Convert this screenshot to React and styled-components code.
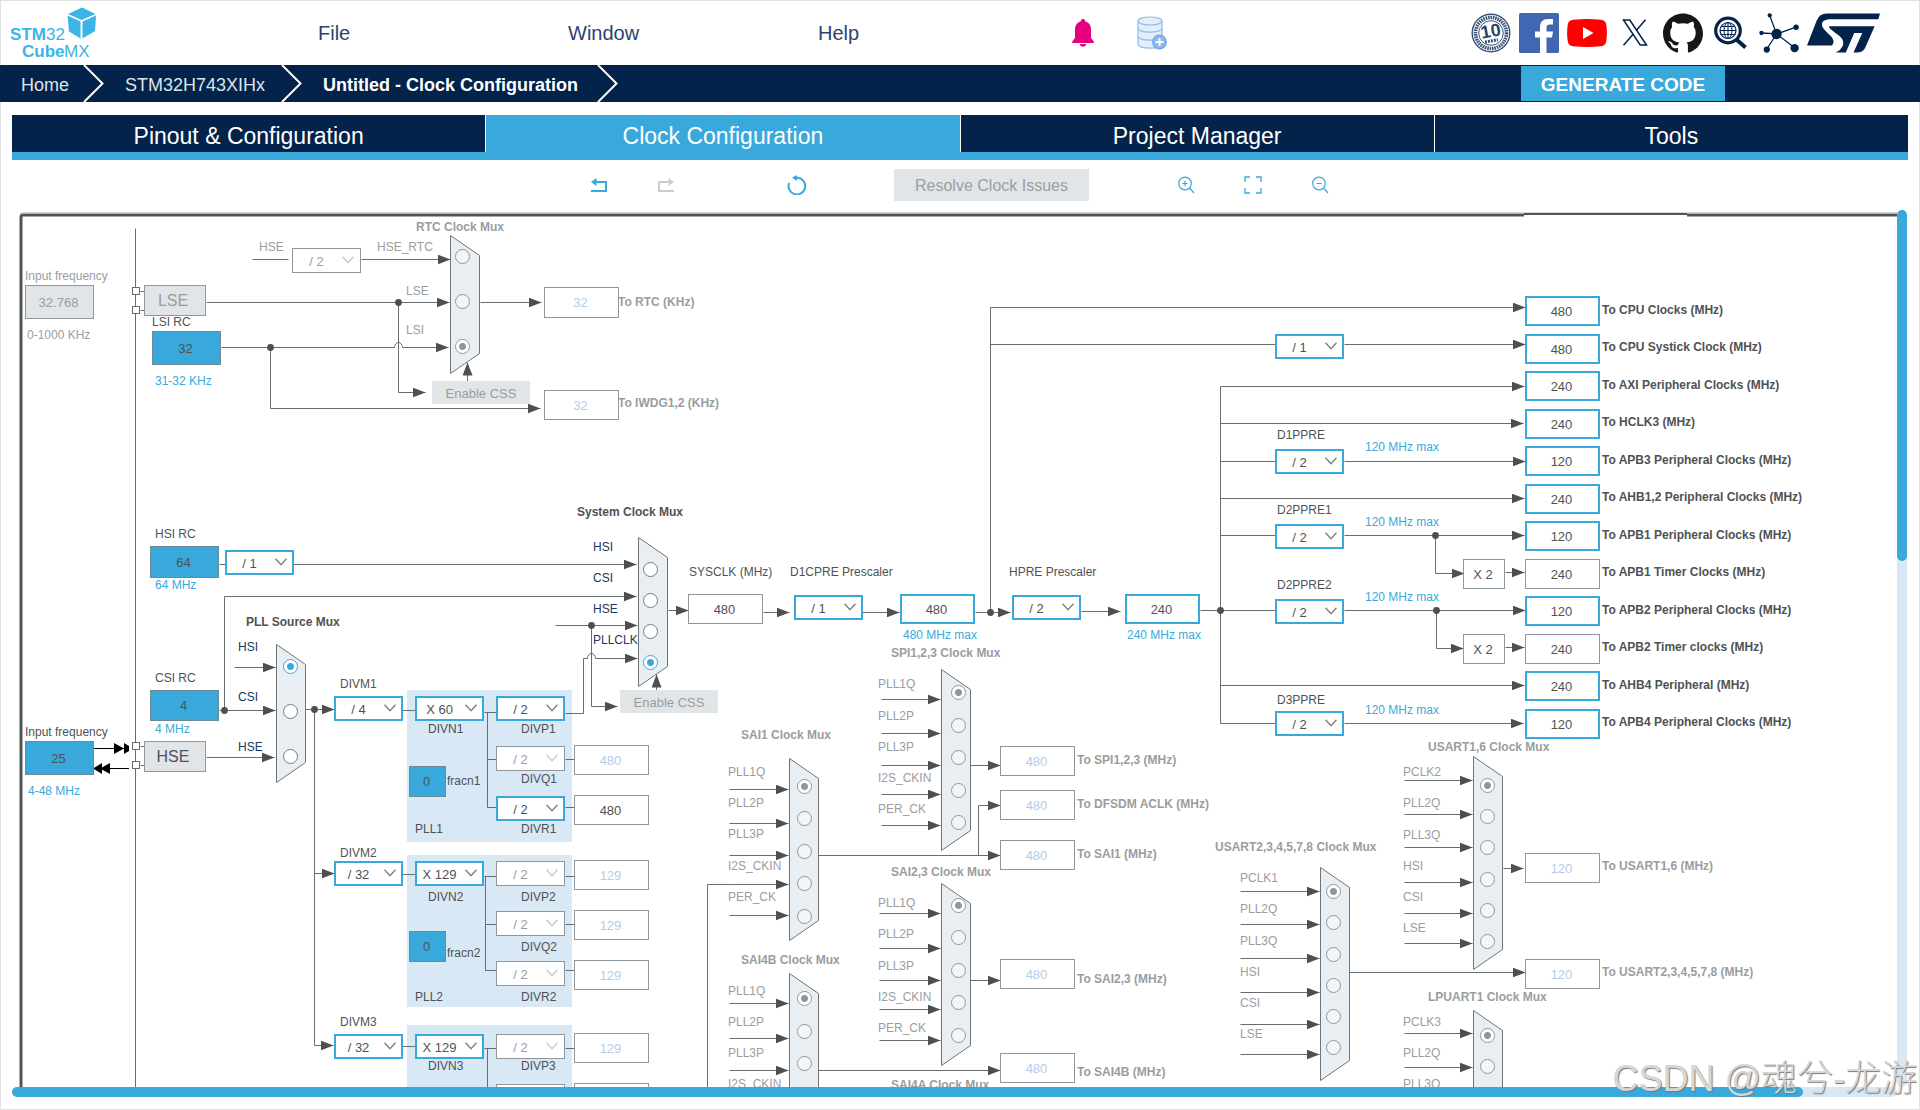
import React from "react";
import styled, { createGlobalStyle, css } from "styled-components";
import { SiGithub } from "react-icons/si";

const C = {
  navy: "#03234b",
  blue: "#39a9dc",
  pale: "#d9e8f5",
  text: "#4f5254",
  muted: "#9a9d9f",
  faint: "#b4cce8",
  button: "#e1e5e8",
  line: "#6a6d6d",
  edge: "#8f979d",
  mux: "#e9eef2",
};

const ORIGIN_X = 12;
const ORIGIN_Y = 210;

const GlobalStyle = createGlobalStyle`
  * { box-sizing: border-box; }
  body { margin: 0; background: #fff; font-family: "Liberation Sans", Arial, sans-serif; }
  button, input, select { font-family: inherit; margin: 0; padding: 0; border: 0; opacity: 1; }
`;

/* ---------- shell ---------- */

const Shell = styled.div`
  display: flex;
  flex-direction: column;
  height: 100vh;
  overflow: hidden;
  position: relative;
  box-shadow: inset 0 0 0 1px #dfe1e2;
`;

const Header = styled.header`
  display: flex;
  align-items: center;
  flex: none;
  height: 65px;
  padding-right: 40px;
`;

const LogoLink = styled.a`
  flex: none;
  width: 318px;
  height: 65px;
  svg { display: block; }
`;

const Menu = styled.nav`
  display: flex;
`;

const MenuButton = styled.button`
  width: 250px;
  background: none;
  text-align: left;
  font-size: 20px;
  line-height: 24px;
  color: #2c4370;
`;

const Notices = styled.div`
  display: flex;
  align-items: center;
  gap: 43px;
  margin-left: 4px;
`;

const IconButton = styled.button`
  display: flex;
  background: none;
  color: ${(p) => p.$color || C.blue};
`;

const Links = styled.nav`
  display: flex;
  align-items: center;
  gap: 8px;
  margin-left: auto;
  a { display: flex; justify-content: center; min-width: 40px; color: ${C.navy}; }
`;

const CrumbBar = styled.nav`
  display: flex;
  flex: none;
  height: 37px;
  background: ${C.navy};
`;

const Crumb = styled.a`
  display: flex;
  align-items: center;
  justify-content: space-between;
  min-width: ${(p) => p.$w}px;
  padding-left: 21px;
  color: ${(p) => (p.$current ? "#fff" : "#dde3ea")};
  font-size: 18px;
  font-weight: ${(p) => (p.$current ? 700 : 400)};
  text-decoration: none;
  white-space: nowrap;
  span { padding-top: 4px; }
`;

const Generate = styled.button`
  align-self: center;
  width: 204px;
  height: 35px;
  margin-left: auto;
  margin-right: 195px;
  && { padding-top: 2px; }
  background: ${C.blue};
  color: #fff;
  font-size: 19px;
  font-weight: 700;
`;

const Tabs = styled.div`
  display: grid;
  grid-template-columns: repeat(4, 1fr);
  column-gap: 1px;
  flex: none;
  margin: 13px 12px 0;
  border-bottom: 8px solid ${C.blue};
`;

const Tab = styled.button`
  height: 37px;
  && { padding-top: 5px; }
  background: ${(p) => (p.$active ? C.blue : C.navy)};
  color: #fff;
  font-size: 23px;
`;

const Toolbar = styled.div`
  display: flex;
  align-items: center;
  flex: none;
  height: 50px;
  padding-left: 590px;
`;

const ToolGroup = styled.div`
  display: flex;
  gap: ${(p) => p.$gap}px;
  margin-right: ${(p) => p.$after}px;
`;

const Resolve = styled.button`
  width: 195px;
  height: 32px;
  margin-right: 88px;
  && { padding-top: 2px; }
  background: ${C.button};
  color: #9a9fa3;
  font-size: 16px;
`;

const Workspace = styled.main`
  display: grid;
  grid-template-columns: 1fr 10px;
  grid-template-rows: 1fr 10px;
  flex: 1;
  min-height: 0;
  margin: 0 13px 13px 12px;
`;

const Track = styled.div`
  background: ${C.pale};
  border-radius: 5px;
`;

const Thumb = styled.div`
  width: ${(p) => p.$w || "100%"};
  height: ${(p) => p.$h || "100%"};
  border-radius: 5px;
  background: ${C.blue};
`;

const Viewport = styled.div`
  position: relative;
  overflow: hidden;
`;

const Watermark = styled.div`
  position: absolute;
  right: 3px;
  bottom: 6px;
  color: #d6d6d6;
  font-family: "Liberation Sans", "Noto Sans CJK SC", sans-serif;
  font-size: 36px;
  font-weight: 300;
  line-height: 50px;
  text-shadow: 1px 1px 1px #777;
  white-space: nowrap;
`;

/* ---------- diagram parts ---------- */

const placed = css`
  position: absolute;
  left: ${(p) => p.$x - ORIGIN_X}px;
  top: ${(p) => p.$y - ORIGIN_Y}px;
`;

const Wiring = styled.svg`
  position: absolute;
  left: 0;
  top: 0;
`;

const PllPanel = styled.div`
  ${placed}
  width: 165px;
  height: 152px;
  background: ${C.pale};
`;

const tones = {
  dark: C.text,
  muted: C.muted,
  blue: C.blue,
  navy: "#1d3763",
};

const Caption = styled.label`
  ${placed}
  margin-top: -7px;
  color: ${(p) => tones[p.$tone]};
  font-size: 12px;
  font-weight: ${(p) => (p.$bold ? 700 : 400)};
  line-height: 14px;
  white-space: nowrap;
`;

const looks = {
  active: css`border: 2px solid ${C.blue}; background: #fff; color: ${C.text};`,
  plain: css`border: 1px solid ${C.edge}; background: #fff; color: ${C.text};`,
  off: css`border: 1px solid ${C.edge}; background: #fff; color: ${C.faint};`,
  offSelect: css`border: 1px solid ${C.edge}; background: #fff; color: ${C.muted};`,
  source: css`border: 1px solid #6f8895; background: ${C.blue}; color: ${C.text};`,
  disabled: css`border: 1px solid ${C.edge}; background: ${C.button}; color: ${C.muted};`,
};

const Value = styled.input`
  ${placed}
  width: ${(p) => p.$w}px;
  height: ${(p) => p.$h}px;
  && { ${(p) => looks[p.$look]} padding-right: 2px; }
  font-size: 13px;
  text-align: center;
`;

const PickerBox = styled.div`
  ${placed}
  width: 69px;
  height: 25px;
  svg { position: absolute; right: 7px; top: 8px; pointer-events: none; }
`;

const Picker = styled.select`
  appearance: none;
  width: 100%;
  height: 100%;
  && { ${(p) => looks[p.$look]} padding: 2px 20px 0 0; }
  font-size: 13px;
  text-align: center;
  text-align-last: center;
`;

const Block = styled.button`
  ${placed}
  width: ${(p) => p.$w}px;
  height: ${(p) => p.$h}px;
  && { border: ${(p) => (p.$flat ? "0" : `1px solid ${C.edge}`)}; padding: ${(p) => (p.$flat ? "2px 0 0" : "0 4px 0 0")}; }
  background: ${C.button};
  color: ${(p) => (p.$dark ? C.text : C.muted)};
  font-size: ${(p) => p.$size}px;
`;

const Radio = styled.input`
  ${placed}
  appearance: none;
  width: 15px;
  height: 15px;
  && { border: 1px solid ${(p) => (p.$muted ? C.edge : "#777b7e")}; }
  border-radius: 50%;
  background: ${(p) => (p.$muted ? "#f3f5f7" : "#fff")};
  &&:checked {
    border-color: ${(p) => (p.$muted ? C.edge : C.blue)};
    background: radial-gradient(circle, ${(p) => (p.$muted ? C.edge : C.blue)} 3px, #fff 4px);
  }
`;

/* ---------- diagram data ---------- */

const muxes = [
  { id: "rtc", title: "RTC Clock Mux", tx: 416, ty: 227, x: 450, w: 29, top: 235, bottom: 373, muted: true, lx: 406, rx: 462, sel: 2,
    ins: [["HSE_RTC", 247, 256, 0, 377], ["LSE", 291, 301], ["LSI", 330, 346]] },
  { id: "pll", title: "PLL Source Mux", tx: 246, ty: 622, x: 276, w: 29, top: 644, bottom: 782, lx: 238, rx: 290, sel: 0,
    ins: [["HSI", 647, 666, 667], ["CSI", 697, 711], ["HSE", 747, 756]], wx: 234 },
  { id: "sys", title: "System Clock Mux", tx: 577, ty: 512, x: 638, w: 29, top: 537, bottom: 686, lx: 593, rx: 650, sel: 3,
    ins: [["HSI", 547, 569], ["CSI", 578, 600], ["HSE", 609, 631], ["PLLCLK", 640, 662]] },
  { id: "spi", title: "SPI1,2,3 Clock Mux", tx: 891, ty: 653, x: 941, w: 29, top: 669, bottom: 850, muted: true, lx: 878, rx: 958, sel: 0, wx: 881,
    ins: [["PLL1Q", 684, 692, 699], ["PLL2P", 716, 725, 733], ["PLL3P", 747, 757, 765], ["I2S_CKIN", 778, 790, 794], ["PER_CK", 809, 822, 825]] },
  { id: "sai1", title: "SAI1 Clock Mux", tx: 741, ty: 735, x: 789, w: 29, top: 758, bottom: 940, muted: true, lx: 728, rx: 804, sel: 0, wx: 729,
    ins: [["PLL1Q", 772, 786, 789], ["PLL2P", 803, 818, 823], ["PLL3P", 834, 851, 855], ["I2S_CKIN", 866, 883, 884], ["PER_CK", 897, 916, 915]] },
  { id: "sai23", title: "SAI2,3 Clock Mux", tx: 891, ty: 872, x: 941, w: 29, top: 883, bottom: 1065, muted: true, lx: 878, rx: 958, sel: 0, wx: 879,
    ins: [["PLL1Q", 903, 905, 913], ["PLL2P", 934, 937, 948], ["PLL3P", 966, 970, 980], ["I2S_CKIN", 997, 1002, 1009], ["PER_CK", 1028, 1035, 1040]] },
  { id: "sai4b", title: "SAI4B Clock Mux", tx: 741, ty: 960, x: 789, w: 29, top: 973, bottom: 1154, muted: true, lx: 728, rx: 804, sel: 0, wx: 729,
    ins: [["PLL1Q", 991, 998, 1003], ["PLL2P", 1022, 1031, 1038], ["PLL3P", 1053, 1063, 1070], ["I2S_CKIN", 1084, 1096, 1100]] },
  { id: "sai4a", title: "SAI4A Clock Mux", tx: 891, ty: 1085, x: 941, w: 29, top: 1098, bottom: 1279, muted: true, lx: 878, rx: 958, sel: 0, ins: [] },
  { id: "u16", title: "USART1,6 Clock Mux", tx: 1428, ty: 747, x: 1473, w: 29, top: 756, bottom: 969, muted: true, lx: 1403, rx: 1487, sel: 0, wx: 1404,
    ins: [["PCLK2", 772, 785, 780], ["PLL2Q", 803, 816, 814], ["PLL3Q", 835, 847, 847], ["HSI", 866, 879, 882], ["CSI", 897, 910, 913], ["LSE", 928, 941, 943]] },
  { id: "u2", title: "USART2,3,4,5,7,8 Clock Mux", tx: 1215, ty: 847, x: 1320, w: 29, top: 867, bottom: 1080, muted: true, lx: 1240, rx: 1333, sel: 0, wx: 1240,
    ins: [["PCLK1", 878, 891, 891], ["PLL2Q", 909, 922, 924], ["PLL3Q", 941, 954, 958], ["HSI", 972, 985, 992], ["CSI", 1003, 1016, 1024], ["LSE", 1034, 1047, 1054]] },
  { id: "lpu", title: "LPUART1 Clock Mux", tx: 1428, ty: 997, x: 1473, w: 29, top: 1010, bottom: 1223, muted: true, lx: 1403, rx: 1487, sel: 0, wx: 1404,
    ins: [["PCLK3", 1022, 1035, 1033], ["PLL2Q", 1053, 1066, 1067], ["PLL3Q", 1084, 1097, 1100]] },
];

/* [id, x, y, width, height, look, value, label, labelX, labelY, labelTone, bold] */
const values = [
  ["lse-in", 25, 285, 69, 34, "disabled", "32.768", "Input frequency", 25, 276, "muted"],
  ["lsi", 152, 331, 69, 34, "source", "32", "LSI RC", 152, 322, "dark"],
  ["rtc-out", 544, 287, 75, 31, "off", "32", "To RTC (KHz)", 618, 302, "muted", 1],
  ["iwdg-out", 544, 390, 75, 30, "off", "32", "To IWDG1,2 (KHz)", 618, 403, "muted", 1],
  ["hsi", 150, 546, 69, 32, "source", "64", "HSI RC", 155, 534, "dark"],
  ["csi", 150, 690, 69, 31, "source", "4", "CSI RC", 155, 678, "dark"],
  ["hse-in", 25, 741, 69, 34, "source", "25", "Input frequency", 25, 732, "dark"],
  ["sysclk", 688, 594, 75, 30, "plain", "480", "SYSCLK (MHz)", 689, 572, "dark"],
  ["d1cpre-out", 900, 594, 75, 30, "active", "480", "480 MHz max", 903, 635, "blue"],
  ["hpre-out", 1125, 594, 75, 30, "active", "240", "240 MHz max", 1127, 635, "blue"],
  ["fracn1", 409, 766, 37, 31, "source", "0", "fracn1", 447, 781, "dark"],
  ["fracn2", 409, 931, 37, 31, "source", "0", "fracn2", 447, 953, "dark"],
  ["spi-out", 1000, 746, 75, 30, "off", "480", "To SPI1,2,3 (MHz)", 1077, 760, "muted", 1],
  ["dfsdm-out", 1000, 790, 75, 30, "off", "480", "To DFSDM ACLK (MHz)", 1077, 804, "muted", 1],
  ["sai1-out", 1000, 840, 75, 30, "off", "480", "To SAI1 (MHz)", 1077, 854, "muted", 1],
  ["sai23-out", 1000, 959, 75, 30, "off", "480", "To SAI2,3 (MHz)", 1077, 979, "muted", 1],
  ["sai4b-out", 1000, 1053, 75, 30, "off", "480", "To SAI4B (MHz)", 1077, 1072, "muted", 1],
  ["cpu", 1525, 296, 75, 30, "active", "480", "To CPU Clocks (MHz)", 1602, 310, "dark", 1],
  ["systick", 1525, 334, 75, 30, "active", "480", "To CPU Systick Clock (MHz)", 1602, 347, "dark", 1],
  ["axi", 1525, 371, 75, 30, "active", "240", "To AXI Peripheral Clocks (MHz)", 1602, 385, "dark", 1],
  ["hclk3", 1525, 409, 75, 30, "active", "240", "To HCLK3 (MHz)", 1602, 422, "dark", 1],
  ["apb3", 1525, 446, 75, 30, "active", "120", "To APB3 Peripheral Clocks (MHz)", 1602, 460, "dark", 1],
  ["ahb12", 1525, 484, 75, 30, "active", "240", "To AHB1,2 Peripheral Clocks (MHz)", 1602, 497, "dark", 1],
  ["apb1", 1525, 521, 75, 30, "active", "120", "To APB1 Peripheral Clocks (MHz)", 1602, 535, "dark", 1],
  ["apb1t", 1525, 559, 75, 30, "plain", "240", "To APB1 Timer Clocks (MHz)", 1602, 572, "dark", 1],
  ["apb2", 1525, 596, 75, 30, "active", "120", "To APB2 Peripheral Clocks (MHz)", 1602, 610, "dark", 1],
  ["apb2t", 1525, 634, 75, 30, "plain", "240", "To APB2 Timer clocks (MHz)", 1602, 647, "dark", 1],
  ["ahb4", 1525, 671, 75, 30, "active", "240", "To AHB4 Peripheral (MHz)", 1602, 685, "dark", 1],
  ["apb4", 1525, 709, 75, 30, "active", "120", "To APB4 Peripheral Clocks (MHz)", 1602, 722, "dark", 1],
  ["u16-out", 1525, 853, 75, 30, "off", "120", "To USART1,6 (MHz)", 1602, 866, "muted", 1],
  ["u2-out", 1525, 959, 75, 30, "off", "120", "To USART2,3,4,5,7,8 (MHz)", 1602, 972, "muted", 1],
];

/* [id, x, y, width, height, look, value, accessible name] */
const unlabelled = [
  ["pll1q-out", 574, 745, 75, 30, "off", "480", "PLL1Q (MHz)"],
  ["pll1r-out", 574, 795, 75, 30, "plain", "480", "PLL1R (MHz)"],
  ["pll2p-out", 574, 860, 75, 30, "off", "129", "PLL2P (MHz)"],
  ["pll2q-out", 574, 910, 75, 30, "off", "129", "PLL2Q (MHz)"],
  ["pll2r-out", 574, 960, 75, 30, "off", "129", "PLL2R (MHz)"],
  ["pll3p-out", 574, 1033, 75, 30, "off", "129", "PLL3P (MHz)"],
  ["pll3q-out", 574, 1083, 75, 30, "off", "129", "PLL3Q (MHz)"],
  ["apb1-x2", 1463, 559, 42, 30, "plain", "X 2", "APB1 timer multiplier"],
  ["apb2-x2", 1463, 634, 42, 30, "plain", "X 2", "APB2 timer multiplier"],
];

/* [id, x, y, value, off, label, labelX, labelY] */
const pickers = [
  ["rtcdiv", 292, 248, "/ 2", 1, "HSE", 259, 247, "muted"],
  ["hsidiv", 225, 550, "/ 1", 0],
  ["divm1", 334, 696, "/ 4", 0, "DIVM1", 340, 684],
  ["divn1", 415, 696, "X 60", 0, "DIVN1", 428, 729],
  ["divp1", 496, 696, "/ 2", 0, "DIVP1", 521, 729],
  ["divq1", 496, 746, "/ 2", 1, "DIVQ1", 521, 779],
  ["divr1", 496, 796, "/ 2", 0, "DIVR1", 521, 829],
  ["divm2", 334, 861, "/ 32", 0, "DIVM2", 340, 853],
  ["divn2", 415, 861, "X 129", 0, "DIVN2", 428, 897],
  ["divp2", 496, 861, "/ 2", 1, "DIVP2", 521, 897],
  ["divq2", 496, 911, "/ 2", 1, "DIVQ2", 521, 947],
  ["divr2", 496, 961, "/ 2", 1, "DIVR2", 521, 997],
  ["divm3", 334, 1034, "/ 32", 0, "DIVM3", 340, 1022],
  ["divn3", 415, 1034, "X 129", 0, "DIVN3", 428, 1066],
  ["divp3", 496, 1034, "/ 2", 1, "DIVP3", 521, 1066],
  ["divq3", 496, 1084, "/ 2", 1],
  ["d1cpre", 794, 595, "/ 1", 0, "D1CPRE Prescaler", 790, 572],
  ["hpre", 1012, 595, "/ 2", 0, "HPRE Prescaler", 1009, 572],
  ["systickdiv", 1275, 334, "/ 1", 0],
  ["d1ppre", 1275, 449, "/ 2", 0, "D1PPRE", 1277, 435],
  ["d2ppre1", 1275, 524, "/ 2", 0, "D2PPRE1", 1277, 510],
  ["d2ppre2", 1275, 599, "/ 2", 0, "D2PPRE2", 1277, 585],
  ["d3ppre", 1275, 711, "/ 2", 0, "D3PPRE", 1277, 700],
];

const notes = [
  ["0-1000 KHz", 27, 335, "muted"],
  ["31-32 KHz", 155, 381, "blue"],
  ["64 MHz", 155, 585, "blue"],
  ["4 MHz", 155, 729, "blue"],
  ["4-48 MHz", 28, 791, "blue"],
  ["PLL1", 415, 829, "dark"],
  ["PLL2", 415, 997, "dark"],
  ["120 MHz max", 1365, 447, "blue"],
  ["120 MHz max", 1365, 522, "blue"],
  ["120 MHz max", 1365, 597, "blue"],
  ["120 MHz max", 1365, 710, "blue"],
];

const arrows = [
  "M361 259H450", "M206 302H449", "M221 347H394a4 5 0 0 1 8 0H448",
  "M398 302V392H425", "M270 347V408H540", "M480 302H541", "M467 381V362",
  "M293 564H636", "M224 710V596H636", "M555 625H637", "M591 625V706H617",
  "M565 713H583V658H587a4 5 0 0 1 8 0H637", "M656 690V674",
  "M219 710H275", "M206 757H274", "M305 709H334", "M314 709V873H334", "M314 873V1045H333",
  "M668 610H688", "M763 612H789", "M862 612H899", "M975 612H1010", "M1081 611H1120",
  "M990 612V307H1525", "M1344 344H1525",
  "M1220 723V386H1524", "M1220 423H1523", "M1344 461H1525", "M1220 498H1524",
  "M1344 535H1524", "M1344 610H1525", "M1220 685H1524", "M1344 723H1523",
  "M1435 535V573H1464", "M1436 610V648H1463", "M1505 572H1524", "M1505 647H1524",
  "M970 765H1000", "M818 855H1000", "M978 855V805H1000", "M970 980H1000", "M818 1070H1000",
  "M1503 868H1523", "M1349 972H1525",
];

const lines = [
  "M135 228V1100", "M252 259H288", "M140 291H144", "M140 310H144", "M140 746H144", "M140 765H144",
  "M219 564H225", "M402 710H415", "M402 874H415", "M402 1046H415",
  "M484 712H496", "M487 712V807H496", "M487 759H496", "M565 759H574", "M565 807H574",
  "M484 876H496", "M485 876V970H496", "M485 924H496", "M565 876H574", "M565 924H574", "M565 970H574",
  "M484 1048H496", "M487 1048V1100", "M565 1048H574",
  "M990 344H1275", "M1200 610H1275", "M1220 461H1275", "M1220 535H1275", "M1220 723H1275",
  "M729 884H707V1100",
];

const dots = [[398, 302], [270, 347], [224, 710], [314, 709], [591, 625], [990, 612], [1220, 610], [1435, 535], [1436, 610]];
const pins = [[132, 287], [132, 306], [132, 742], [132, 761]];

function muxShape({ x, w, top, bottom }) {
  return `M${x} ${top}L${x + w} ${top + 20}V${bottom - 20}L${x} ${bottom}Z`;
}

function Wires() {
  return (
    <Wiring width="1886" height="900" viewBox={`${ORIGIN_X} ${ORIGIN_Y} 1886 900`} aria-hidden="true" fill="none">
      <defs>
        <marker id="head" markerUnits="userSpaceOnUse" markerWidth="14" markerHeight="12" refX="13" refY="5" orient="auto">
          <path d="M0 0L13 5L0 10Z" fill="#4d4f50" />
        </marker>
      </defs>
      <path d="M21 1100V217Q21 215 23 215H1524M1687 215H1898" stroke="#525556" strokeWidth="3" />
      <path d="M20 214Q20 213 23 213H1898" stroke="#b3b8bc" />
      <path d="M1524 214H1687" stroke="#525556" strokeWidth="2" />
      <g stroke={C.line} strokeWidth="1" transform="translate(.5 .5)">
        {lines.map((d) => <path key={d} d={d} />)}
        {muxes.flatMap((m) => (m.wx ? m.ins.filter((i) => i[3]).map((i) => (
          <path key={m.id + i[0]} d={`M${m.wx} ${i[3]}H${m.x - 1}`} markerEnd="url(#head)" />
        )) : []))}
        {arrows.map((d) => <path key={d} d={d} markerEnd="url(#head)" />)}
        {muxes.map((m) => <path key={m.id} d={muxShape(m)} fill={C.mux} stroke="#6e7579" />)}
        {pins.map(([x, y]) => <rect key={y} x={x} y={y} width="7" height="7" fill="#fff" />)}
      </g>
      {dots.map(([x, y]) => <circle key={x + "-" + y} cx={x + 0.5} cy={y + 0.5} r="3.4" fill="#4d4f50" />)}
      <g fill="#000" stroke="#000">
        <path d="M94 748.500H129M94 768.500H129" />
        <path stroke="none" d="M114 743L124 748.500L114 754ZM124 743L129 746V751L124 754ZM110 763L100 768.500L110 774ZM102 763L93 768.500L102 774Z" />
      </g>
    </Wiring>
  );
}

function Mux({ mux }) {
  return (
    <>
      <Caption as="span" $x={mux.tx} $y={mux.ty} $tone={mux.muted ? "muted" : "dark"} $bold>{mux.title}</Caption>
      {mux.ins.map(([name, ly, ry, , lx], i) => {
        const id = `${mux.id}-${i}`;
        return (
          <React.Fragment key={id}>
            <Caption htmlFor={id} $x={lx || mux.lx} $y={ly} $tone={mux.muted ? "muted" : "navy"}>{name}</Caption>
            <Radio type="radio" id={id} name={mux.id} defaultChecked={i === mux.sel} disabled={mux.muted}
              $muted={mux.muted} $x={mux.rx - 7} $y={ry - 7} />
          </React.Fragment>
        );
      })}
    </>
  );
}

function Diagram() {
  return (
    <Viewport>
      <PllPanel $x={407} $y={690} />
      <PllPanel $x={407} $y={855} />
      <PllPanel $x={407} $y={1025} />
      <Wires />
      {muxes.map((m) => <Mux key={m.id} mux={m} />)}
      {notes.map(([t, x, y, tone], i) => <Caption as="span" key={i} $x={x} $y={y} $tone={tone}>{t}</Caption>)}
      {values.map(([id, x, y, w, h, look, v, label, lx, ly, tone, bold]) => (
        <React.Fragment key={id}>
          <Value id={id} $x={x} $y={y} $w={w} $h={h} $look={look} defaultValue={v} disabled={look === "disabled" || look === "off"} />
          <Caption htmlFor={id} $x={lx} $y={ly} $tone={tone} $bold={bold}>{label}</Caption>
        </React.Fragment>
      ))}
      {unlabelled.map(([id, x, y, w, h, look, v, name]) => (
        <Value key={id} id={id} aria-label={name} $x={x} $y={y} $w={w} $h={h} $look={look} defaultValue={v} readOnly />
      ))}
      {pickers.map(([id, x, y, v, off, label, lx, ly, tone]) => (
        <React.Fragment key={id}>
          <PickerBox $x={x} $y={y}>
            <Picker id={id} $look={off ? "offSelect" : "active"} disabled={!!off} aria-label={label ? undefined : id}>
              <option>{v}</option>
            </Picker>
            <svg width="12" height="8" viewBox="0 0 12 8" fill="none" stroke={off ? "#c6cacd" : "#7c8185"} strokeWidth="1.400">
              <path d="M.5 .8L6 6.800L11.500 .8" />
            </svg>
          </PickerBox>
          {label && <Caption htmlFor={id} $x={lx} $y={ly} $tone={tone || "dark"}>{label}</Caption>}
        </React.Fragment>
      ))}
      <Block $x={144} $y={285} $w={62} $h={31} $size={16}>LSE</Block>
      <Block $x={144} $y={741} $w={62} $h={31} $size={16} $dark>HSE</Block>
      <Block $x={432} $y={381} $w={98} $h={23} $size={13} $flat>Enable CSS</Block>
      <Block $x={620} $y={690} $w={98} $h={23} $size={13} $flat>Enable CSS</Block>
    </Viewport>
  );
}

/* ---------- icons ---------- */

function Logo() {
  return (
    <svg width="104" height="65" viewBox="0 0 104 65" fill="#3cb4e6" fontFamily='"Liberation Sans", Arial, sans-serif' fontSize="17">
      <text x="10" y="40" fontWeight="700">STM</text>
      <text x="46" y="40">32</text>
      <text x="22" y="57" fontWeight="700">Cube</text>
      <text x="64" y="57">MX</text>
      <path d="M82 7.500L95.500 14L81.500 20L68 14ZM67.500 15.500L80.500 21.500V38.500L69 31.500ZM96 15.500L82.500 21.500V38.500L95 31Z" />
    </svg>
  );
}

function Chevron() {
  return (
    <svg width="21" height="37" viewBox="0 0 21 37" fill="none" stroke="#fff" strokeWidth="2" aria-hidden="true">
      <path d="M1 0L19.500 18.500L1 37" />
    </svg>
  );
}

function DatabaseIcon() {
  return (
    <svg width="30" height="34" viewBox="0 0 30 34" fill="#e2effa" stroke="#8fbfe6" strokeWidth="1.200">
      <path d="M1 5V28C1 33.500 25 33.500 25 28V5" />
      <ellipse cx="13" cy="5" rx="12" ry="4" />
      <path fill="none" d="M1 12C1 17.500 25 17.500 25 12M1 20C1 25.500 25 25.500 25 20" />
      <circle cx="22.500" cy="26" r="6.800" fill="#8ab9ef" stroke="#6aa5e6" />
      <path stroke="#fff" strokeWidth="2" d="M22.500 22V30M18.500 26H26.500" />
    </svg>
  );
}

function BadgeIcon() {
  return (
    <svg width="40" height="40" viewBox="0 0 40 40" fill="none" stroke="#3b5375">
      <circle cx="20" cy="20" r="18.800" strokeWidth="1.400" />
      <circle cx="20" cy="20" r="15.500" strokeWidth="3.600" strokeDasharray="1.600 .8" />
      <circle cx="20" cy="20" r="12.300" strokeWidth="1" fill="#fff" />
      <text x="20" y="24" textAnchor="middle" fontSize="18" fontWeight="700" fill="#2c4568" stroke="none" transform="rotate(-10 20 20)">10</text>
      <path d="M14 29L27 26.700" strokeWidth="3" strokeDasharray="2 1" />
    </svg>
  );
}

function FacebookIcon() {
  return (
    <svg width="40" height="40" viewBox="0 0 40 40">
      <rect width="40" height="40" rx="1.500" fill="#4267b2" />
      <path fill="#fff" d="M21 40V24.500H16V18.500H21V14C21 9 24 6 29 6H34V11.500H31C28.500 11.500 27.500 12.500 27.500 14.800V18.500H34L33 24.500H27.500V40Z" />
    </svg>
  );
}

function YoutubeIcon() {
  return (
    <svg width="40" height="28" viewBox="0 0 40 28">
      <path fill="#f00" d="M6 .8Q20 -.6 34 .8Q38.500 1.200 39.200 5.500Q40.600 14 39.200 22.500Q38.500 26.800 34 27.200Q20 28.600 6 27.200Q1.500 26.800 .8 22.500Q-.6 14 .8 5.500Q1.500 1.200 6 .8Z" />
      <path fill="#fff" d="M16 8L26.500 14L16 20Z" />
    </svg>
  );
}

function XIcon() {
  return (
    <svg width="26" height="27" viewBox="0 0 26 27" fill="none" stroke={C.navy} strokeWidth="1.500">
      <path d="M1.500 1H7.800L24.500 26H18.200Z" />
      <path d="M23.500 .8L14.500 11.200M11.300 15L1.500 26.200" />
    </svg>
  );
}

function WebSearchIcon() {
  return (
    <svg width="34" height="34" viewBox="0 0 34 34" fill="none" stroke={C.navy}>
      <circle cx="14" cy="14.500" r="12.300" strokeWidth="3.200" />
      <path d="M23 24L31.500 31.500" strokeWidth="4" />
      <circle cx="14" cy="14.500" r="8" strokeWidth="1.200" />
      <ellipse cx="14" cy="14.500" rx="4" ry="8" />
      <path d="M6 14.500H22M7.500 10.500H20.500M7.500 18.500H20.500M14 6.500V22.500" />
    </svg>
  );
}

function NetworkIcon() {
  return (
    <svg width="40" height="40" viewBox="0 0 41 41" fill={C.navy} stroke={C.navy} strokeWidth="1.300">
      <path d="M18 21.500L11 2.500M18 21.500L38 14.500M18 21.500L3 20.500M18 21.500L8 37M18 21.500L36.500 35.500" />
      <g stroke="none">
        <circle cx="18" cy="21.500" r="5.300" />
        <circle cx="11" cy="2.500" r="2.200" />
        <circle cx="38" cy="14.500" r="2.800" />
        <circle cx="2.500" cy="20.500" r="2.200" />
        <circle cx="8" cy="37.500" r="3.200" />
        <circle cx="36.500" cy="36" r="4.300" />
      </g>
    </svg>
  );
}

function StLogo() {
  return (
    <svg width="73" height="40" viewBox="1221 38 218 118" fill={C.navy}>
      <path d="M1221 134L1250 60Q1258 39 1280 39H1439L1434 56H1287Q1262 58 1266 76Q1270 86 1292 106Q1306 120 1296 134Z" />
      <path d="M1287 77H1423L1396 138Q1390 155 1372 155H1360L1386 97H1362L1337 155H1306Q1322 150 1329 132Q1332 118 1318 106Q1306 97 1290 84Q1286 80 1287 77Z" />
    </svg>
  );
}

function ToolIcon({ children, size = 18 }) {
  return (
    <svg width={size} height={size} viewBox="0 0 18 18" fill="none" stroke="currentColor" strokeWidth="1.500">{children}</svg>
  );
}

/* ---------- page ---------- */

const links = [
  ["10 years", <BadgeIcon />],
  ["Facebook", <FacebookIcon />],
  ["YouTube", <YoutubeIcon />],
  ["X", <XIcon />],
  ["GitHub", <SiGithub size={40} color="#181616" />],
  ["ST search", <WebSearchIcon />],
  ["ST community", <NetworkIcon />],
  ["STMicroelectronics", <StLogo />],
];

export default function App() {
  return (
    <Shell>
      <GlobalStyle />
      <Header>
        <LogoLink href="#home" aria-label="STM32 CubeMX"><Logo /></LogoLink>
        <Menu>
          <MenuButton>File</MenuButton>
          <MenuButton>Window</MenuButton>
          <MenuButton>Help</MenuButton>
        </Menu>
        <Notices>
          <IconButton $color="#e6007e" aria-label="Notifications">
            <svg width="22" height="28" viewBox="0 0 22 28" fill="currentColor">
              <path d="M11 0a2 2 0 0 1 2 2.300c4 1 6 4.300 6 8.200v8.500l2.800 3.500v1.500H.2v-1.500L3 19V10.500c0-3.900 2-7.200 6-8.200A2 2 0 0 1 11 0ZM8 25h6a3 2.600 0 0 1-6 0Z" />
            </svg>
          </IconButton>
          <IconButton aria-label="Updates"><DatabaseIcon /></IconButton>
        </Notices>
        <Links>
          {links.map(([name, icon]) => <a key={name} href={"#" + name.replace(/ /g, "-")} aria-label={name}>{icon}</a>)}
        </Links>
      </Header>

      <CrumbBar>
        <Crumb href="#home" $w={104}><span>Home</span><Chevron /></Crumb>
        <Crumb href="#mcu" $w={198}><span>STM32H743XIHx</span><Chevron /></Crumb>
        <Crumb href="#clock" $w={316} $current><span>Untitled - Clock Configuration</span><Chevron /></Crumb>
        <Generate>GENERATE CODE</Generate>
      </CrumbBar>

      <Tabs>
        <Tab>Pinout &amp; Configuration</Tab>
        <Tab $active>Clock Configuration</Tab>
        <Tab>Project Manager</Tab>
        <Tab>Tools</Tab>
      </Tabs>

      <Toolbar>
        <ToolGroup $gap={49} $after={112}>
          <IconButton aria-label="Undo"><ToolIcon><path strokeWidth="2" d="M1 15H16V6H4" /><path fill="currentColor" stroke="none" d="M1 6L6.500 2V10Z" /></ToolIcon></IconButton>
          <IconButton $color="#ccc" aria-label="Redo"><ToolIcon><path strokeWidth="2" d="M17 15H2V6H14" /><path fill="currentColor" stroke="none" d="M17 6L11.500 2V10Z" /></ToolIcon></IconButton>
        </ToolGroup>
        <ToolGroup $gap={0} $after={87}>
          <IconButton aria-label="Reset"><ToolIcon size={20}><path strokeWidth="1.800" d="M2 7A7.500 7.500 0 1 0 9 2.500H6" /><path fill="currentColor" stroke="none" d="M4.500 2.500L9 0V5.500Z" /></ToolIcon></IconButton>
        </ToolGroup>
        <Resolve>Resolve Clock Issues</Resolve>
        <ToolGroup $gap={49} $after={0}>
          <IconButton aria-label="Zoom in"><ToolIcon><circle cx="8" cy="7.500" r="6.300" strokeWidth="1.200" /><path strokeWidth="1.200" d="M12.500 12L17 17M8 5V10M5.500 7.500H10.500" /></ToolIcon></IconButton>
          <IconButton aria-label="Fit"><ToolIcon><path strokeWidth="1.300" d="M1 6V1H6M12 1H17V6M17 12V17H12M6 17H1V12" /></ToolIcon></IconButton>
          <IconButton aria-label="Zoom out"><ToolIcon><circle cx="8" cy="7.500" r="6.300" strokeWidth="1.200" /><path strokeWidth="1.200" d="M12.500 12L17 17M5.500 7.500H10.500" /></ToolIcon></IconButton>
        </ToolGroup>
      </Toolbar>

      <Workspace>
        <Diagram />
        <Track><Thumb $h="40%" /></Track>
        <Track><Thumb $w="95%" /></Track>
      </Workspace>
      <Watermark>CSDN @魂兮-龙游</Watermark>
    </Shell>
  );
}
